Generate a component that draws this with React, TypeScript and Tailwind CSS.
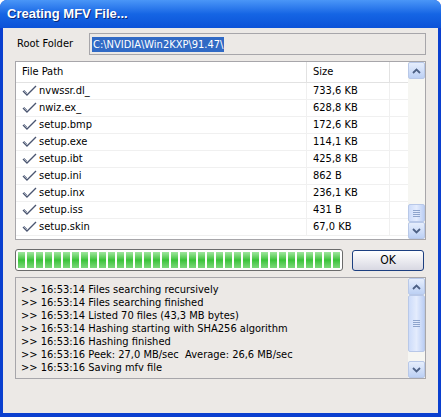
import React from 'react';

const files = [
  { name: 'nvwssr.dl_', size: '733,6 KB' },
  { name: 'nwiz.ex_', size: '628,8 KB' },
  { name: 'setup.bmp', size: '172,6 KB' },
  { name: 'setup.exe', size: '114,1 KB' },
  { name: 'setup.ibt', size: '425,8 KB' },
  { name: 'setup.ini', size: '862 B' },
  { name: 'setup.inx', size: '236,1 KB' },
  { name: 'setup.iss', size: '431 B' },
  { name: 'setup.skin', size: '67,0 KB' },
];

const log = [
  '>> 16:53:14 Files searching recursively',
  '>> 16:53:14 Files searching finished',
  '>> 16:53:14 Listed 70 files (43,3 MB bytes)',
  '>> 16:53:14 Hashing starting with SHA256 algorithm',
  '>> 16:53:16 Hashing finished',
  '>> 16:53:16 Peek: 27,0 MB/sec  Average: 26,6 MB/sec',
  '>> 16:53:16 Saving mfv file',
];

const Check = () => (
  <svg width="15" height="12" viewBox="0 0 15 12" className="shrink-0">
    <path d="M1 6 L5 10 L14 1" fill="none" stroke="#4a5570" strokeWidth="1.4" />
    <path d="M2 5 L5 8" fill="none" stroke="#8a93a8" strokeWidth="1" />
  </svg>
);

const ScrollBtn = ({ up }: { up?: boolean }) => (
  <div className="w-[17px] h-[17px] rounded-[2px] border border-[#b8c8e8] bg-gradient-to-b from-[#e6eefc] to-[#bcd0f4] flex items-center justify-center">
    <svg width="9" height="6" viewBox="0 0 9 6">
      <path d={up ? 'M1 5 L4.5 1.5 L8 5' : 'M1 1 L4.5 4.5 L8 1'} fill="none" stroke="#4d6185" strokeWidth="1.8" />
    </svg>
  </div>
);

const Thumb = ({ h }: { h: string }) => (
  <div className={`w-[17px] ${h} rounded-[2px] border border-[#b8c8e8] bg-gradient-to-r from-[#cddcfa] via-[#e4ecfd] to-[#bccff5] flex flex-col items-center justify-center gap-[1px]`}>
    <div className="w-[7px] h-px bg-[#8ea4cc]" />
    <div className="w-[7px] h-px bg-[#8ea4cc]" />
    <div className="w-[7px] h-px bg-[#8ea4cc]" />
    <div className="w-[7px] h-px bg-[#8ea4cc]" />
  </div>
);

export default function App() {
  return (
    <div className="w-[441px] h-[417px] bg-white font-['DejaVu_Sans_Condensed','Liberation_Sans',sans-serif] text-[11px] text-black">
      <div className="w-full h-full rounded-t-[7px] bg-[#0a3fcf] flex flex-col overflow-hidden">
        <div className="h-[28px] shrink-0 bg-gradient-to-b from-[#4a96f7] via-[#1565e4] to-[#0c52d8] flex items-center pl-[7px]">
          <span className="text-white font-bold text-[13px] font-['Liberation_Sans',sans-serif] [text-shadow:1px_1px_0_#0a2a7a]">Creating MFV File...</span>
        </div>
        <div className="flex-1 mx-[3px] mb-[4px] bg-[#ece9e6] px-[12px] pt-[5px] flex flex-col">
          <div className="flex items-center h-[22px]">
            <span className="w-[74px] pl-[2px]">Root Folder</span>
            <div className="flex-1 h-[22px] border border-[#a7a6aa] bg-[#ece9e6] flex items-center pl-[2px]">
              <span className="bg-[#316ac5] text-white px-[1px] leading-[15px]">C:\NVIDIA\Win2KXP\91.47\</span>
            </div>
          </div>

          <div className="mt-[6px] h-[179px] border border-[#a7a6aa] bg-white flex">
            <div className="flex-1 flex flex-col">
              <div className="h-[21px] flex border-b border-[#e2e2e2] items-center">
                <div className="w-[291px] pl-[6px] border-r border-[#e2e2e2] h-full flex items-center">File Path</div>
                <div className="w-[83px] pl-[6px] border-r border-[#e2e2e2] h-full flex items-center">Size</div>
                <div className="flex-1" />
              </div>
              {files.map((f) => (
                <div key={f.name} className="h-[17px] flex border-b border-[#f0f0f0]">
                  <div className="w-[291px] pl-[6px] flex items-center gap-[2px] border-r border-[#f0f0f0]">
                    <Check />
                    <span>{f.name}</span>
                  </div>
                  <div className="w-[83px] pl-[6px] flex items-center border-r border-[#f0f0f0]">{f.size}</div>
                  <div className="flex-1" />
                </div>
              ))}
            </div>
            <div className="w-[17px] bg-[#f6f6f2] flex flex-col justify-between">
              <ScrollBtn up />
              <div className="flex flex-col">
                <Thumb h="h-[18px]" />
                <ScrollBtn />
              </div>
            </div>
          </div>

          <div className="mt-[9px] flex items-center gap-[9px]">
            <div className="w-[328px] h-[22px] rounded-[3px] border border-[#6b6b6b] bg-white p-[2px] flex gap-[2px] overflow-hidden">
              {Array.from({ length: 36 }).map((_, i) => (
                <div key={i} className="w-[7px] shrink-0 h-full bg-gradient-to-b from-[#9ee79e] via-[#37c337] to-[#7ad87a]" />
              ))}
            </div>
            <button className="w-[72px] h-[21px] rounded-[3px] border border-[#1c3f80] bg-gradient-to-b from-[#ffffff] to-[#d8d8e2] text-[12px]">OK</button>
          </div>

          <div className="mt-[6px] h-[102px] border border-[#a7a6aa] bg-[#ece9e6] flex">
            <div className="flex-1 pl-[5px] pt-[5px] flex flex-col">
              {log.map((l) => (
                <div key={l} className="h-[13px] leading-[13px] whitespace-pre">{l}</div>
              ))}
            </div>
            <div className="w-[17px] bg-[#f6f6f2] flex flex-col">
              <ScrollBtn up />
              <Thumb h="h-[57px]" />
              <div className="flex-1" />
              <ScrollBtn />
            </div>
          </div>
        </div>
      </div>
    </div>
  );
}
